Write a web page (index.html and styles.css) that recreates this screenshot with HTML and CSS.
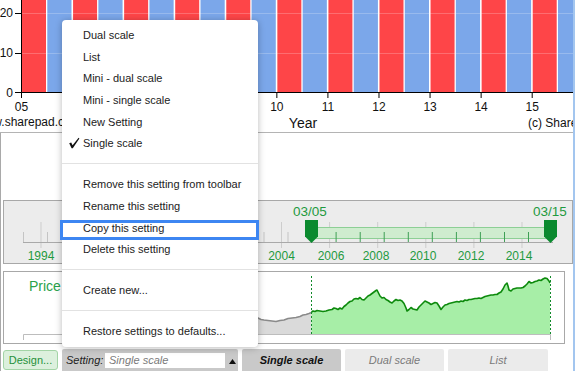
FILE: index.html
```html
<!DOCTYPE html>
<html>
<head>
<meta charset="utf-8">
<link rel="stylesheet" href="styles.css">
</head>
<body>
<div class="app">
  <div class="main-chart">
    <svg width="573" height="132" viewBox="0 0 573 132">
      <g class="bars">
        <rect class="red" x="22" y="0" width="24" height="92"/><rect class="blue" x="47.3" y="0" width="24.2" height="92"/>
        <rect class="red" x="73.07" y="0" width="24" height="92"/><rect class="blue" x="98.37" y="0" width="24.2" height="92"/>
        <rect class="red" x="124.14" y="0" width="24" height="92"/><rect class="blue" x="149.44" y="0" width="24.2" height="92"/>
        <rect class="red" x="175.21" y="0" width="24" height="92"/><rect class="blue" x="200.51" y="0" width="24.2" height="92"/>
        <rect class="red" x="226.28" y="0" width="24" height="92"/><rect class="blue" x="251.58" y="0" width="24.2" height="92"/>
        <rect class="red" x="277.35" y="0" width="24" height="92"/><rect class="blue" x="302.65" y="0" width="24.2" height="92"/>
        <rect class="red" x="328.42" y="0" width="24" height="92"/><rect class="blue" x="353.72" y="0" width="24.2" height="92"/>
        <rect class="red" x="379.49" y="0" width="24" height="92"/><rect class="blue" x="404.79" y="0" width="24.2" height="92"/>
        <rect class="red" x="430.56" y="0" width="24" height="92"/><rect class="blue" x="455.86" y="0" width="24.2" height="92"/>
        <rect class="red" x="481.63" y="0" width="24" height="92"/><rect class="blue" x="506.93" y="0" width="24.2" height="92"/>
        <rect class="red" x="532.7" y="0" width="24" height="92"/><rect class="blue" x="558" y="0" width="24.2" height="92"/>
      </g>
      <line class="grid" x1="22" y1="13.5" x2="573" y2="13.5"/>
      <line class="grid" x1="22" y1="53.5" x2="573" y2="53.5"/>
      <g class="axis">
        <line x1="21.5" y1="0" x2="21.5" y2="98"/>
        <line x1="15" y1="92.5" x2="573" y2="92.5"/>
        <line x1="15" y1="13.5" x2="21.5" y2="13.5"/>
        <line x1="15" y1="53.5" x2="21.5" y2="53.5"/>
        <line x1="72.57" y1="92" x2="72.57" y2="98"/>
        <line x1="123.64" y1="92" x2="123.64" y2="98"/>
        <line x1="174.71" y1="92" x2="174.71" y2="98"/>
        <line x1="225.78" y1="92" x2="225.78" y2="98"/>
        <line x1="276.85" y1="92" x2="276.85" y2="98"/>
        <line x1="327.92" y1="92" x2="327.92" y2="98"/>
        <line x1="378.99" y1="92" x2="378.99" y2="98"/>
        <line x1="430.06" y1="92" x2="430.06" y2="98"/>
        <line x1="481.13" y1="92" x2="481.13" y2="98"/>
        <line x1="532.2" y1="92" x2="532.2" y2="98"/>
      </g>
      <g class="lbl">
        <text x="13" y="17" text-anchor="end">20</text>
        <text x="13" y="57" text-anchor="end">10</text>
        <text x="13" y="97" text-anchor="end">0</text>
        <text x="21.5" y="111" text-anchor="middle">05</text>
        <text x="72.57" y="111" text-anchor="middle">06</text>
        <text x="123.64" y="111" text-anchor="middle">07</text>
        <text x="174.71" y="111" text-anchor="middle">08</text>
        <text x="225.78" y="111" text-anchor="middle">09</text>
        <text x="276.85" y="111" text-anchor="middle">10</text>
        <text x="327.92" y="111" text-anchor="middle">11</text>
        <text x="378.99" y="111" text-anchor="middle">12</text>
        <text x="430.06" y="111" text-anchor="middle">13</text>
        <text x="481.13" y="111" text-anchor="middle">14</text>
        <text x="532.2" y="111" text-anchor="middle">15</text>
        <text x="-24" y="126">www.sharepad.co.uk</text>
        <text x="528" y="127">(c) ShareScope</text>
      </g>
      <text class="year" x="303" y="128" text-anchor="middle">Year</text>
    </svg>
  </div>

  <div class="lower">
    <div class="navigator">
      <svg width="568" height="62" viewBox="4 201 568 62">
        <g class="tall">
          <line x1="41" y1="222" x2="41" y2="248"/>
          <line x1="89.1" y1="222" x2="89.1" y2="248"/>
          <line x1="137.2" y1="222" x2="137.2" y2="248"/>
          <line x1="185.3" y1="222" x2="185.3" y2="248"/>
          <line x1="233.4" y1="222" x2="233.4" y2="248"/>
          <line x1="281.5" y1="222" x2="281.5" y2="248"/>
          <line x1="329.6" y1="222" x2="329.6" y2="248"/>
          <line x1="377.7" y1="222" x2="377.7" y2="248"/>
          <line x1="425.8" y1="222" x2="425.8" y2="248"/>
          <line x1="473.9" y1="222" x2="473.9" y2="248"/>
          <line x1="522" y1="222" x2="522" y2="248"/>
        </g>
        <line class="nav-axis" x1="23" y1="242.5" x2="553" y2="242.5"/>
        <g class="short">
          <line x1="23.5" y1="232" x2="23.5" y2="242"/>
          <line x1="47.5" y1="232" x2="47.5" y2="242"/>
          <line x1="71.6" y1="232" x2="71.6" y2="242"/>
          <line x1="95.6" y1="232" x2="95.6" y2="242"/>
          <line x1="119.7" y1="232" x2="119.7" y2="242"/>
          <line x1="143.7" y1="232" x2="143.7" y2="242"/>
          <line x1="167.8" y1="232" x2="167.8" y2="242"/>
          <line x1="191.8" y1="232" x2="191.8" y2="242"/>
          <line x1="215.9" y1="232" x2="215.9" y2="242"/>
          <line x1="239.9" y1="232" x2="239.9" y2="242"/>
          <line x1="264" y1="232" x2="264" y2="242"/>
          <line x1="288" y1="232" x2="288" y2="242"/>
        </g>
        <rect class="range" x="311.5" y="227.5" width="239" height="11"/>
        <g class="short-in">
          <line x1="336.1" y1="232" x2="336.1" y2="242"/>
          <line x1="360.2" y1="232" x2="360.2" y2="242"/>
          <line x1="384.2" y1="232" x2="384.2" y2="242"/>
          <line x1="408.3" y1="232" x2="408.3" y2="242"/>
          <line x1="432.3" y1="232" x2="432.3" y2="242"/>
          <line x1="456.4" y1="232" x2="456.4" y2="242"/>
          <line x1="480.4" y1="232" x2="480.4" y2="242"/>
          <line x1="504.5" y1="232" x2="504.5" y2="242"/>
          <line x1="528.5" y1="232" x2="528.5" y2="242"/>
        </g>
        <path class="handle" d="M305 220 H318 V236.5 L311.5 243 L305 236.5 Z"/>
        <path class="handle" d="M544 220 H557 V236.5 L550.5 243 L544 236.5 Z"/>
        <g class="nav-lbl">
          <text x="310" y="216" text-anchor="middle" class="big">03/05</text>
          <text x="550" y="216" text-anchor="middle" class="big">03/15</text>
          <text x="41" y="260" text-anchor="middle">1994</text>
          <text x="89.1" y="260" text-anchor="middle">1996</text>
          <text x="137.2" y="260" text-anchor="middle">1998</text>
          <text x="185.3" y="260" text-anchor="middle">2000</text>
          <text x="233.4" y="260" text-anchor="middle">2002</text>
          <text x="281.5" y="260" text-anchor="middle">2004</text>
          <text x="331" y="260" text-anchor="middle">2006</text>
          <text x="376" y="260" text-anchor="middle">2008</text>
          <text x="423" y="260" text-anchor="middle">2010</text>
          <text x="471" y="260" text-anchor="middle">2012</text>
          <text x="519" y="260" text-anchor="middle">2014</text>
        </g>
      </svg>
    </div>

    <div class="price">
      <svg width="560" height="71" viewBox="4 272 560 71">
        <text class="price-lbl" x="29" y="291">Price</text>
        <polygon class="grey-area" points="64,334 64,325 100,324 150,322 200,321 240,320 250,319 255,318.5 258,318 261,319.5 264,320 268,320.5 272,321 276,321.5 280,320.5 284,320 288,318.5 292,318 296,317.5 300,316.5 303,315 306,314.5 309,313.5 311.5,312.5 311.5,334"/>
        <polyline class="grey-line" points="64,325 100,324 150,322 200,321 240,320 250,319 255,318.5 258,318 261,319.5 264,320 268,320.5 272,321 276,321.5 280,320.5 284,320 288,318.5 292,318 296,317.5 300,316.5 303,315 306,314.5 309,313.5 311.5,312.5"/>
        <polygon class="green-area" points="311.5,334 311.5,312 313,311 315,311.5 317,310.5 320,311 323,311.5 326,311 329,310 332,309.5 334,308 336,308.5 338,309.5 340,308 342,309 344,306.5 346,305 348,303 350,301.5 352,301 354,299 356,298.5 358,299 360,297.5 362,299.5 364,300 366,298 368,296 370,295 372,293.5 374,292 376,290.5 377,290 378,292 380,296 382,298 384,297.5 386,299.5 388,300.5 390,302 392,303 394,301 396,299.5 398,300.5 400,300 402,301 404,303.5 406,308 407,311 409,309.5 411,307.5 413,309 415,309.5 417,310 419,307 421,305 423,303 425,301 427,302 429,303 431,304.5 433,303.5 435,302.5 437,303 439,306 441,309.5 443,307 445,305 447,304.5 449,303.5 451,303 453,302.5 455,302 457,301.5 459,302 461,301 463,301.5 465,300 467,300.5 469,299.5 471,299.5 473,299 475,298.5 477,298.5 479,298 481,298.5 483,297.5 485,296.5 487,296 489,295.5 491,295 493,295 495,294.5 497,294.5 499,293 501,292 503,289 505,285 507,283 508,286 509,290 511,291 513,289 515,288.5 517,288 519,288 521,288 523,287.5 525,286 527,284 529,281.5 531,283 533,282.5 535,281.5 537,281 539,280 541,280.5 543,279 545,278 547,278.5 549,281 550,283 550,334"/>
        <polyline class="green-line" points="311.5,312 313,311 315,311.5 317,310.5 320,311 323,311.5 326,311 329,310 332,309.5 334,308 336,308.5 338,309.5 340,308 342,309 344,306.5 346,305 348,303 350,301.5 352,301 354,299 356,298.5 358,299 360,297.5 362,299.5 364,300 366,298 368,296 370,295 372,293.5 374,292 376,290.5 377,290 378,292 380,296 382,298 384,297.5 386,299.5 388,300.5 390,302 392,303 394,301 396,299.5 398,300.5 400,300 402,301 404,303.5 406,308 407,311 409,309.5 411,307.5 413,309 415,309.5 417,310 419,307 421,305 423,303 425,301 427,302 429,303 431,304.5 433,303.5 435,302.5 437,303 439,306 441,309.5 443,307 445,305 447,304.5 449,303.5 451,303 453,302.5 455,302 457,301.5 459,302 461,301 463,301.5 465,300 467,300.5 469,299.5 471,299.5 473,299 475,298.5 477,298.5 479,298 481,298.5 483,297.5 485,296.5 487,296 489,295.5 491,295 493,295 495,294.5 497,294.5 499,293 501,292 503,289 505,285 507,283 508,286 509,290 511,291 513,289 515,288.5 517,288 519,288 521,288 523,287.5 525,286 527,284 529,281.5 531,283 533,282.5 535,281.5 537,281 539,280 541,280.5 543,279 545,278 547,278.5 549,281 550,283"/>
        <line class="dash" x1="311.5" y1="276" x2="311.5" y2="334"/>
        <line class="dash" x1="550.5" y1="276" x2="550.5" y2="334"/>
        <polyline class="p-axis" points="23.5,340 23.5,334.5 550.5,334.5 550.5,340"/>
      </svg>
    </div>

    <div class="toolbar">
      <div class="design">Design...</div>
      <div class="setting">
        <span class="setting-lbl">Setting:</span>
        <span class="setting-input">Single scale</span>
        <svg class="tri" width="7" height="5" viewBox="0 0 7 5"><path d="M0 5 L3.5 0 L7 5 Z"/></svg>
      </div>
      <div class="tab active">Single scale</div>
      <div class="tab">Dual scale</div>
      <div class="tab last">List</div>
    </div>
  </div>

  <div class="menu">
    <div class="item"><span class="ico"></span>Dual scale</div>
    <div class="item"><span class="ico"></span>List</div>
    <div class="item"><span class="ico"></span>Mini - dual scale</div>
    <div class="item"><span class="ico"></span>Mini - single scale</div>
    <div class="item"><span class="ico"></span>New Setting</div>
    <div class="item"><span class="ico"><svg width="12" height="12" viewBox="0 0 12 12"><path d="M1.2 6.2 L3.2 5.6 L4.6 8.2 L10.6 0.8 L11.4 1.6 L4.8 11.2 L3.6 11.2 Z"/></svg></span>Single scale</div>
    <div class="sep"></div>
    <div class="item"><span class="ico"></span>Remove this setting from toolbar</div>
    <div class="item"><span class="ico"></span>Rename this setting</div>
    <div class="item"><span class="ico"></span>Copy this setting</div>
    <div class="item"><span class="ico"></span>Delete this setting</div>
    <div class="sep"></div>
    <div class="item"><span class="ico"></span>Create new...</div>
    <div class="sep"></div>
    <div class="item"><span class="ico"></span>Restore settings to defaults...</div>
  </div>
  <div class="highlight"></div>
</div>
</body>
</html>
```

FILE: styles.css
```css
* { box-sizing: border-box; }
html, body { margin: 0; padding: 0; background: #fff; }
body { font-family: "Liberation Sans", Arial, sans-serif; }

.app {
  position: relative;
  width: 575px;
  height: 371px;
  overflow: hidden;
  border-right: 2px solid #a3c6ef;
  background: #fff;
}

svg { display: block; }

.main-chart {
  height: 133px;
  border-bottom: 1px solid #b4b4b4;
  overflow: hidden;
}
.bars .red { fill: #fe4548; }
.bars .blue { fill: #7ba7ea; }
.grid { stroke: rgba(255,255,255,0.22); stroke-width: 1; }
.axis line { stroke: #000; stroke-width: 1; }
.lbl text { font-family: "Liberation Sans", Arial, sans-serif; font-size: 12px; fill: #111; }
.year { font-family: "Liberation Sans", Arial, sans-serif; font-size: 14px; fill: #111; }

.lower {
  height: 238px;
  border-left: 1px solid #a9a9a9;
  padding-top: 67px;
}

.navigator {
  margin-left: 2px;
  width: 570px;
  height: 64px;
  border: 1px solid #a8a8a8;
  background: #ececec;
}
.tall line { stroke: #cdcdcd; stroke-width: 1; }
.short line { stroke: #c4c4c4; stroke-width: 1; }
.nav-axis { stroke: #a9a9a9; stroke-width: 1; }
.range { fill: #cfeccf; stroke: #8dcf95; stroke-width: 1; }
.short-in line { stroke: #3e9f55; stroke-width: 1; }
.handle { fill: #0b8a2f; }
.nav-lbl text { font-family: "Liberation Sans", Arial, sans-serif; font-size: 12px; fill: #1f9a40; }
.nav-lbl text.big { font-size: 13.5px; }

.price {
  margin: 7px 0 0 2px;
  width: 562px;
  height: 73px;
  border: 1px solid #a8a8a8;
  background: #fff;
}
.price-lbl { font-family: "Liberation Sans", Arial, sans-serif; font-size: 14px; fill: #2aa24a; }
.grey-area { fill: #dadada; }
.grey-line { fill: none; stroke: #8a8a8a; stroke-width: 1.6; stroke-linejoin: round; }
.green-area { fill: #a7eea7; }
.green-line { fill: none; stroke: #0d8a0d; stroke-width: 1.6; stroke-linejoin: round; }
.dash { stroke: #118a2a; stroke-width: 1; stroke-dasharray: 2 2; }
.p-axis { fill: none; stroke: #bdbdbd; stroke-width: 1; }

.toolbar {
  display: flex;
  gap: 4px;
  margin: 5px 0 0 2px;
  align-items: flex-start;
  font-size: 11px;
}
.design {
  width: 55px;
  height: 20px;
  margin-top: 1px;
  border: 1px solid #a3d4a6;
  border-radius: 3px;
  background: #dcf0dd;
  color: #25913a;
  display: flex;
  align-items: center;
  justify-content: center;
}
.setting {
  width: 176px;
  height: 22px;
  background: #c9c9c9;
  border-radius: 2px 2px 0 0;
  display: flex;
  align-items: center;
  padding-left: 4px;
}
.setting-lbl { font-style: italic; color: #222; width: 39px; }
.setting-input {
  width: 120px;
  height: 15px;
  background: #fff;
  color: #7a7a7a;
  font-style: italic;
  padding-left: 4px;
  line-height: 15px;
}
.tri { margin-left: 4px; margin-top: 2px; fill: #111; }
.tab {
  width: 99px;
  height: 22px;
  background: #ebebeb;
  color: #7a7a7a;
  font-style: italic;
  border-radius: 2px 2px 0 0;
  display: flex;
  align-items: center;
  justify-content: center;
}
.tab.last { width: 100px; }
.tab.active { background: #c9c9c9; color: #111; font-weight: bold; }

.menu {
  position: absolute;
  left: 62px;
  top: 20px;
  width: 196px;
  height: 327px;
  background: #fff;
  border-radius: 4px;
  box-shadow: 0 1px 7px rgba(0,0,0,0.28);
  padding-top: 4.2px;
  font-size: 11px;
  color: #222;
}
.item {
  display: flex;
  align-items: center;
  height: 21.7px;
  white-space: nowrap;
}
.ico {
  width: 21px;
  flex: none;
  display: flex;
  justify-content: center;
  padding-left: 2px;
}
.ico svg { fill: #111; }
.sep { height: 1px; background: #e2e2e2; margin: 9px 0; }

.highlight {
  position: absolute;
  left: 60px;
  top: 220px;
  width: 199px;
  height: 20px;
  border: 3px solid #3d86f2;
}
```
